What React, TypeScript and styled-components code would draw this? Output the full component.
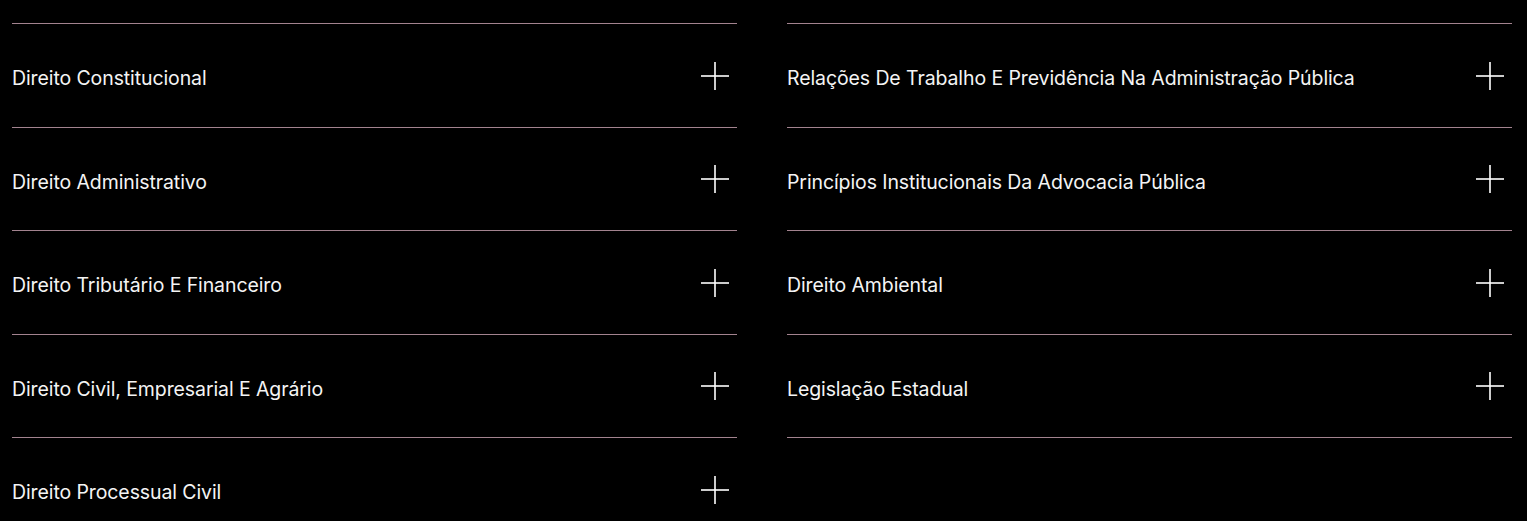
import React from "react";
import styled, { createGlobalStyle } from "styled-components";

const GlobalStyle = createGlobalStyle`
  html, body {
    margin: 0;
    padding: 0;
    background: #000;
  }
  body {
    font-family: Inter, "Noto Sans", "Liberation Sans", sans-serif;
    -webkit-font-smoothing: antialiased;
  }
`;

const Wrapper = styled.section`
  display: grid;
  grid-template-columns: 725px 725px;
  column-gap: 50px;
  align-items: start;
  padding: 23px 15px 0 12px;
  background: #000;
`;

const Column = styled.ul`
  list-style: none;
  margin: 0;
  padding: 0;
  display: flex;
  flex-direction: column;
`;

const Item = styled.li`
  box-sizing: border-box;
  height: 103.5px;
  display: flex;
  align-items: center;
  justify-content: space-between;
  padding: 1px 8px 0 0;
  border-top: 1px solid #a3838f;
  cursor: pointer;
`;

const Title = styled.span`
  color: #f4f4f4;
  font-size: 19.5px;
  font-weight: 400;
  letter-spacing: -0.1px;
  line-height: 24px;
  padding-top: 5px;
`;

const PlusIcon = styled.svg`
  width: 28px;
  height: 28px;
  flex-shrink: 0;
  stroke: #fff;
  stroke-width: 1.6;
`;

const Plus = () => (
  <PlusIcon viewBox="0 0 28 28" aria-hidden="true">
    <line x1="0" y1="14" x2="28" y2="14" />
    <line x1="14" y1="0" x2="14" y2="28" />
  </PlusIcon>
);

const left = [
  "Direito Constitucional",
  "Direito Administrativo",
  "Direito Tributário E Financeiro",
  "Direito Civil, Empresarial E Agrário",
  "Direito Processual Civil",
];

const right = [
  "Relações De Trabalho E Previdência Na Administração Pública",
  "Princípios Institucionais Da Advocacia Pública",
  "Direito Ambiental",
  "Legislação Estadual",
];

const LastRule = styled.li`
  border-top: 1px solid #a3838f;
`;

const App = () => (
  <>
    <GlobalStyle />
    <Wrapper>
      <Column>
        {left.map((t) => (
          <Item key={t}>
            <Title>{t}</Title>
            <Plus />
          </Item>
        ))}
      </Column>
      <Column>
        {right.map((t) => (
          <Item key={t}>
            <Title>{t}</Title>
            <Plus />
          </Item>
        ))}
        <LastRule />
      </Column>
    </Wrapper>
  </>
);

export default App;
